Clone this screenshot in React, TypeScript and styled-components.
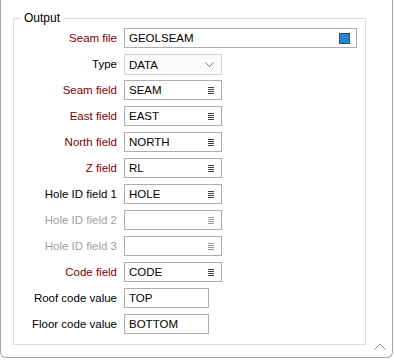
import styled, { createGlobalStyle } from 'styled-components'

const GlobalStyle = createGlobalStyle`
  html, body {
    margin: 0;
    padding: 0;
    background: #ffffff;
  }
  body {
    font-family: "Liberation Sans", Arial, sans-serif;
    font-size: 11.5px;
    color: #000000;
  }
`;

type Tone = 'required' | 'normal' | 'disabled'

interface Row {
  label: string,
  tone: Tone,
  kind: 'file' | 'select' | 'field' | 'value',
  value: string,
}

const rows: Row[] = [
  { label: 'Seam file', tone: 'required', kind: 'file', value: 'GEOLSEAM' },
  { label: 'Type', tone: 'normal', kind: 'select', value: 'DATA' },
  { label: 'Seam field', tone: 'required', kind: 'field', value: 'SEAM' },
  { label: 'East field', tone: 'required', kind: 'field', value: 'EAST' },
  { label: 'North field', tone: 'required', kind: 'field', value: 'NORTH' },
  { label: 'Z field', tone: 'required', kind: 'field', value: 'RL' },
  { label: 'Hole ID field 1', tone: 'normal', kind: 'field', value: 'HOLE' },
  { label: 'Hole ID field 2', tone: 'disabled', kind: 'field', value: '' },
  { label: 'Hole ID field 3', tone: 'disabled', kind: 'field', value: '' },
  { label: 'Code field', tone: 'required', kind: 'field', value: 'CODE' },
  { label: 'Roof code value', tone: 'normal', kind: 'value', value: 'TOP' },
  { label: 'Floor code value', tone: 'normal', kind: 'value', value: 'BOTTOM' },
]

const widths = { file: 233, select: 98, field: 98, value: 85 }

const ListIcon = ({ dim }: { dim: boolean }) => (
  <svg width="6" height="7" viewBox="0 0 6 7" shapeRendering="crispEdges">
    {[0.5, 2.5, 4.5, 6.5].map((y) => (
      <line key={y} x1="0" x2="6" y1={y} y2={y} stroke={dim ? '#9a9a9a' : '#404040'} strokeWidth="1" />
    ))}
  </svg>
)

const ChevronDown = () => (
  <svg width="9" height="5" viewBox="0 0 9 5">
    <polyline points="0.5,0.5 4.5,4.5 8.5,0.5" fill="none" stroke="#707070" strokeWidth="1" />
  </svg>
)

function Control({ row }: { row: Row }) {
  const dim = row.tone === 'disabled'
  return (
    <StBox $width={widths[row.kind]} $select={row.kind === 'select'}>
      <StValue>{row.value}</StValue>
      {row.kind === 'file' && <StSwatch />}
      {row.kind === 'field' && <ListIcon dim={dim} />}
      {row.kind === 'select' && <ChevronDown />}
    </StBox>
  )
}

function App() {
  return (
    <>
      <GlobalStyle />
      <StPanel>
        <StGroup>
          <StLegend>Output</StLegend>
          <StGrid>
            {rows.map((row) => (
              <StRowFragment key={row.label}>
                <StLabel $tone={row.tone}>{row.label}</StLabel>
                <Control row={row} />
              </StRowFragment>
            ))}
          </StGrid>
        </StGroup>
        <StCollapse>
          <svg width="12" height="7" viewBox="0 0 12 7">
            <polyline points="0.5,6.5 6,1 11.5,6.5" fill="none" stroke="#8a8a8a" strokeWidth="1" />
          </svg>
        </StCollapse>
      </StPanel>
    </>
  )
}

export default App

const StPanel = styled.div`
  position: relative;
  box-sizing: border-box;
  width: 393px;
  height: 358px;
  border: 1px solid #a8a8a8;
  border-top: none;
  border-radius: 0 0 6px 6px;
  padding-top: 11px;
`;

const StGroup = styled.fieldset`
  box-sizing: border-box;
  width: 353px;
  margin: 0 0 0 12px;
  padding: 3px 7px 10px 7px;
  border: 1px solid #dcdcdc;
  border-radius: 0;
`;

const StLegend = styled.legend`
  padding: 0 3px;
  line-height: 14px;
  font-size: 12px;
  color: #000000;
`;

const StGrid = styled.div`
  display: grid;
  grid-template-columns: 96px auto;
  grid-auto-rows: 20px;
  column-gap: 7px;
  row-gap: 6px;
  justify-items: start;
  align-items: center;
`;

const StRowFragment = styled.div`
  display: contents;
`;

const toneColor: Record<Tone, string> = {
  required: '#800000',
  normal: '#000000',
  disabled: '#a0a0a0',
}

const StLabel = styled.span<{ $tone: Tone }>`
  justify-self: end;
  color: ${(p) => toneColor[p.$tone]};
  white-space: nowrap;
`;

const StBox = styled.div<{ $width: number, $select: boolean }>`
  box-sizing: border-box;
  width: ${(p) => p.$width}px;
  height: ${(p) => (p.$select ? 21 : 20)}px;
  display: flex;
  align-items: center;
  padding: 0 7px 0 4px;
  border: 1px solid ${(p) => (p.$select ? '#d4d4d4' : '#adadad')};
  background: ${(p) => (p.$select ? '#fbfbfb' : '#ffffff')};
  margin-top: ${(p) => (p.$select ? 1 : 0)}px;
`;

const StValue = styled.span`
  flex: 1;
  white-space: nowrap;
  color: #000000;
`;

const StSwatch = styled.span`
  box-sizing: border-box;
  width: 11px;
  height: 11px;
  margin-right: -1px;
  background: #2386d1;
  border: 1px solid #2e4d6b;
`;

const StCollapse = styled.div`
  position: absolute;
  right: 6px;
  bottom: 7px;
  display: flex;
`;
